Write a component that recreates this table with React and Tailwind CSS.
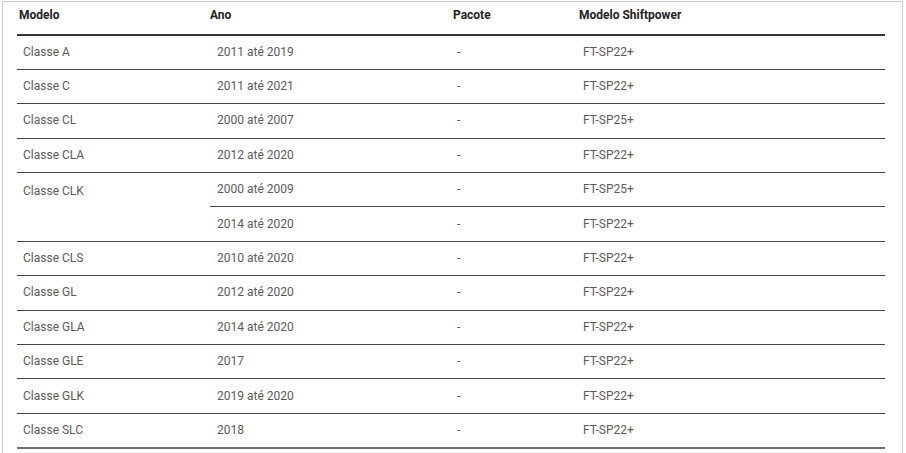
const rows = [
  { modelo: 'Classe A', anos: ['2011 até 2019'], pacote: '-', sp: ['FT-SP22+'] },
  { modelo: 'Classe C', anos: ['2011 até 2021'], pacote: '-', sp: ['FT-SP22+'] },
  { modelo: 'Classe CL', anos: ['2000 até 2007'], pacote: '-', sp: ['FT-SP25+'] },
  { modelo: 'Classe CLA', anos: ['2012 até 2020'], pacote: '-', sp: ['FT-SP22+'] },
  { modelo: 'Classe CLK', anos: ['2000 até 2009', '2014 até 2020'], pacote: '-', sp: ['FT-SP25+', 'FT-SP22+'] },
  { modelo: 'Classe CLS', anos: ['2010 até 2020'], pacote: '-', sp: ['FT-SP22+'] },
  { modelo: 'Classe GL', anos: ['2012 até 2020'], pacote: '-', sp: ['FT-SP22+'] },
  { modelo: 'Classe GLA', anos: ['2014 até 2020'], pacote: '-', sp: ['FT-SP22+'] },
  { modelo: 'Classe GLE', anos: ['2017'], pacote: '-', sp: ['FT-SP22+'] },
  { modelo: 'Classe GLK', anos: ['2019 até 2020'], pacote: '-', sp: ['FT-SP22+'] },
  { modelo: 'Classe SLC', anos: ['2018'], pacote: '-', sp: ['FT-SP22+'] },
];

const cell = 'h-[34.4px] align-middle text-left font-normal pb-[1px]';

export default function App() {
  return (
    <div className="h-[453px] w-[906px] overflow-hidden bg-white font-['Roboto','Liberation_Sans',sans-serif]">
      <div className="ml-[2px] mt-px h-[460px] w-[901px] border-l border-r border-t border-[#c9c9c9] pl-[14px]">
        <table className="w-[868px] table-fixed border-collapse text-[12px] text-[#5a5a5a]">
          <colgroup>
            <col className="w-[193px]" />
            <col className="w-[239px]" />
            <col className="w-[126px]" />
            <col />
          </colgroup>
          <thead>
            <tr className="border-b-2 border-[#333]">
              <th className="h-[33px] pb-[6px] pl-[2px] text-left font-bold text-[#222]">Modelo</th>
              <th className="h-[33px] pb-[6px] pl-0 text-left font-bold text-[#222]">Ano</th>
              <th className="h-[33px] pb-[6px] pl-[4px] text-left font-bold text-[#222]">Pacote</th>
              <th className="h-[33px] pb-[6px] pl-[4px] text-left font-bold text-[#222]">Modelo Shiftpower</th>
            </tr>
          </thead>
          <tbody>
            {rows.map((row, i) => {
              const last = i === rows.length - 1;
              const rowBorder = last ? 'border-b-2 border-[#707070]' : 'border-b border-[#444]';
              return row.anos.map((ano, j) => {
                const lastSub = j === row.anos.length - 1;
                return (
                  <tr key={row.modelo + ano} className={lastSub ? rowBorder : ''}>
                    {j === 0 && (
                      <td
                        rowSpan={row.anos.length}
                        className={`${cell} pl-[6px] ${row.anos.length > 1 ? 'align-top pt-[9px]' : ''}`}
                      >
                        {row.modelo}
                      </td>
                    )}
                    <td className={`${cell} pl-[7px] ${!lastSub ? 'border-b border-[#444]' : ''}`}>{ano}</td>
                    <td className={`${cell} pl-[8px] ${!lastSub ? 'border-b border-[#444]' : ''}`}>{row.pacote}</td>
                    <td className={`${cell} pl-[8px] ${!lastSub ? 'border-b border-[#444]' : ''}`}>{row.sp[j]}</td>
                  </tr>
                );
              });
            })}
          </tbody>
        </table>
      </div>
    </div>
  );
}
